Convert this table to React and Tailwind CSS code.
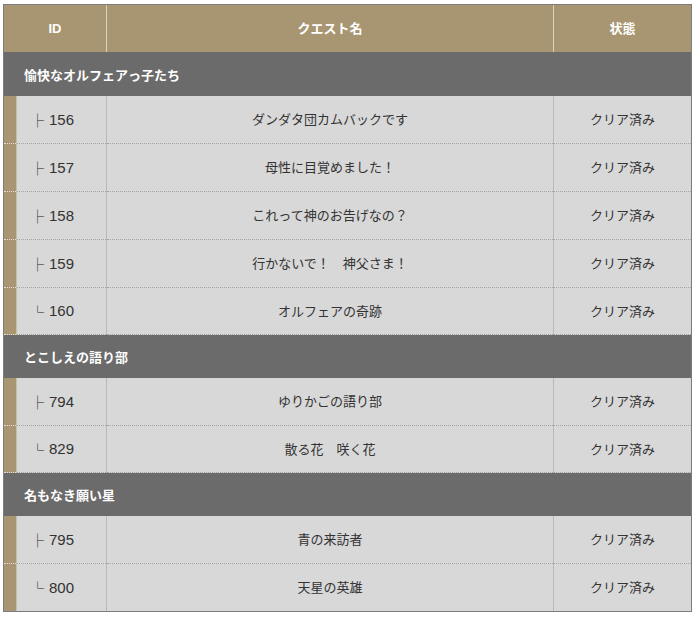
const groups = [
  {
    name: '愉快なオルフェアっ子たち',
    quests: [
      { mark: '├', id: '156', title: 'ダンダタ団カムバックです' },
      { mark: '├', id: '157', title: '母性に目覚めました！' },
      { mark: '├', id: '158', title: 'これって神のお告げなの？' },
      { mark: '├', id: '159', title: '行かないで！　神父さま！' },
      { mark: '└', id: '160', title: 'オルフェアの奇跡' },
    ],
  },
  {
    name: 'とこしえの語り部',
    quests: [
      { mark: '├', id: '794', title: 'ゆりかごの語り部' },
      { mark: '└', id: '829', title: '散る花　咲く花' },
    ],
  },
  {
    name: '名もなき願い星',
    quests: [
      { mark: '├', id: '795', title: '青の来訪者' },
      { mark: '└', id: '800', title: '天星の英雄' },
    ],
  },
]

const font = { fontFamily: '"Liberation Sans", "Noto Sans CJK JP", sans-serif' }

function QuestRow({ quest, last, final }) {
  // last row of a group is 1px shorter; the very last row has no dotted line
  const height = final ? 'h-[47px]' : last ? 'h-[47px]' : 'h-[48px]'
  const line = final ? '' : 'border-b border-dotted'
  return (
    <div className={`flex ${height} bg-[#d8d8d8] text-[13px] text-[#333333]`}>
      <div className={`w-[12px] bg-[#a89672] ${line} border-[#e6e0d2]`} />
      <div className={`w-[1px] bg-[#c9bfa6] ${line} border-[#c0c0c0]`} />
      <div className={`w-[89px] flex items-center justify-center pr-[18px] pt-[1px] ${line} border-[#a6a6a6]`}>
        <span className="mr-[5px] font-['Noto_Sans_CJK_JP'] font-bold text-[13px] text-[#222222]">{quest.mark}</span>
        <span className="text-[15px]">{quest.id}</span>
      </div>
      <div className={`w-[1px] bg-[#b9b9b9] ${line} border-[#a6a6a6]`} />
      <div className={`w-[446px] flex items-center justify-center pt-[1px] ${line} border-[#a6a6a6]`}>
        {quest.title}
      </div>
      <div className={`w-[1px] bg-[#b9b9b9] ${line} border-[#a6a6a6]`} />
      <div className={`flex-1 flex items-center justify-center pt-[1px] ${line} border-[#a6a6a6]`}>
        クリア済み
      </div>
    </div>
  )
}

export default function App() {
  return (
    <div className="min-h-screen bg-white pt-[4px] pl-[3px]" style={font}>
      <div className="w-[689px] border border-[#7c7c7c]">

        {/* Header */}
        <div className="flex h-[47px] bg-[#a89672] text-white text-[13px] font-bold">
          <div className="w-[102px] flex items-center justify-center">ID</div>
          <div className="w-[1px] bg-[#ddd3bd]" />
          <div className="w-[446px] flex items-center justify-center">クエスト名</div>
          <div className="w-[1px] bg-[#ddd3bd]" />
          <div className="flex-1 flex items-center justify-center">状態</div>
        </div>

        {groups.map((group, gi) => (
          <div key={group.name}>
            <div className={`flex items-center ${gi === 0 ? 'h-[44px]' : 'h-[43px]'} bg-[#6b6b6b] pl-[20px] pt-[3px] text-white text-[13px] font-bold`}>
              {group.name}
            </div>
            {group.quests.map((q, qi) => (
              <QuestRow
                key={q.id}
                quest={q}
                last={qi === group.quests.length - 1}
                final={gi === groups.length - 1 && qi === group.quests.length - 1}
              />
            ))}
          </div>
        ))}
      </div>
    </div>
  )
}
